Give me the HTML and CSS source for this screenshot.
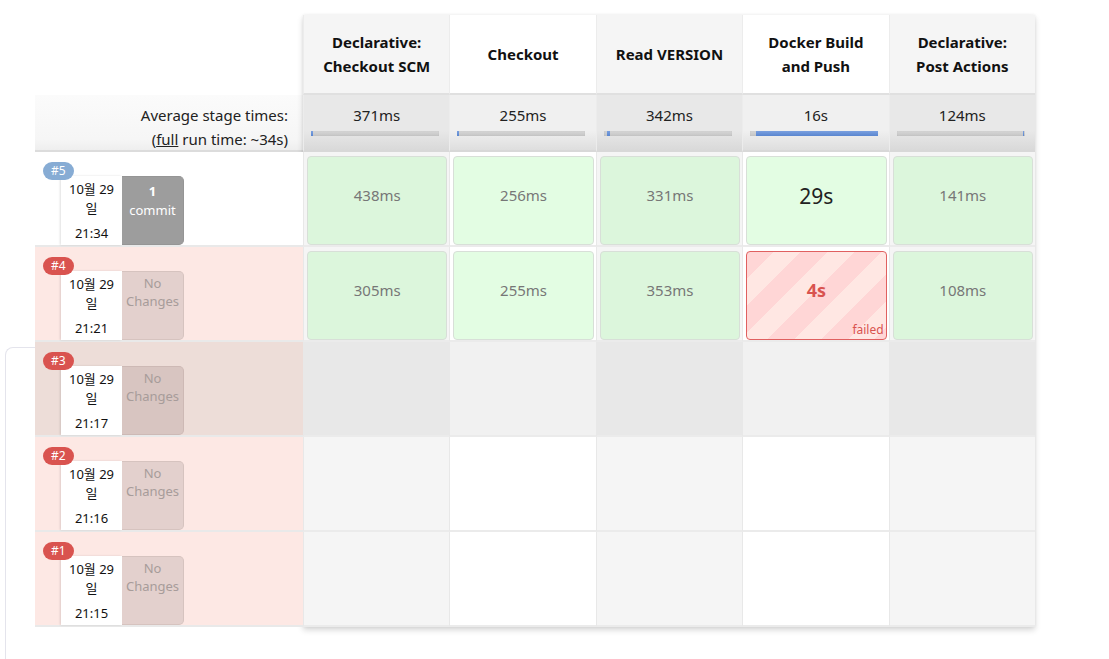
FILE: index.html
```html
<!DOCTYPE html>
<html lang="ko">
<head>
<meta charset="utf-8">
<title>Stage View</title>
<link rel="stylesheet" href="styles.css">
</head>
<body>
<div class="page">
  <div class="side-panel"></div>
  <div class="stage-view">
    <div class="builds">
      <div class="builds-head"></div>
      <div class="avg-label">
        <div>Average stage times:</div>
        <div>(<a href="#" class="full">full</a> run time: ~34s)</div>
      </div>

      <div class="build">
        <span class="badge badge-blue">#5</span>
        <div class="date"><div class="day">10월 29<br>일</div><div class="time">21:34</div></div>
        <div class="changes changes-commit"><b>1</b><br>commit</div>
      </div>
      <div class="build failed">
        <span class="badge badge-red">#4</span>
        <div class="date"><div class="day">10월 29<br>일</div><div class="time">21:21</div></div>
        <div class="changes">No<br>Changes</div>
      </div>
      <div class="build failed hover">
        <span class="badge badge-red">#3</span>
        <div class="date"><div class="day">10월 29<br>일</div><div class="time">21:17</div></div>
        <div class="changes">No<br>Changes</div>
      </div>
      <div class="build failed">
        <span class="badge badge-red">#2</span>
        <div class="date"><div class="day">10월 29<br>일</div><div class="time">21:16</div></div>
        <div class="changes">No<br>Changes</div>
      </div>
      <div class="build failed">
        <span class="badge badge-red">#1</span>
        <div class="date"><div class="day">10월 29<br>일</div><div class="time">21:15</div></div>
        <div class="changes">No<br>Changes</div>
      </div>
    </div>

    <div class="grid">
      <div class="head odd">Declarative:<br>Checkout SCM</div>
      <div class="head even">Checkout</div>
      <div class="head odd">Read VERSION</div>
      <div class="head even">Docker Build<br>and Push</div>
      <div class="head odd">Declarative:<br>Post Actions</div>

      <div class="avg odd"><div>371ms</div><div class="bar"><span class="fill" style="margin-left:0px;width:2px"></span></div></div>
      <div class="avg even"><div>255ms</div><div class="bar"><span class="fill" style="margin-left:0px;width:2px"></span></div></div>
      <div class="avg odd"><div>342ms</div><div class="bar"><span class="fill" style="margin-left:3px;width:3px"></span></div></div>
      <div class="avg even"><div>16s</div><div class="bar"><span class="fill" style="margin-left:6px;width:122px"></span></div></div>
      <div class="avg odd"><div>124ms</div><div class="bar"><span class="fill" style="margin-left:126px;width:1px"></span></div></div>

      <div class="cell odd"><div class="box ok">438ms</div></div>
      <div class="cell even"><div class="box ok">256ms</div></div>
      <div class="cell odd"><div class="box ok">331ms</div></div>
      <div class="cell even"><div class="box ok big">29s</div></div>
      <div class="cell odd"><div class="box ok">141ms</div></div>

      <div class="cell odd"><div class="box ok">305ms</div></div>
      <div class="cell even"><div class="box ok">255ms</div></div>
      <div class="cell odd"><div class="box ok">353ms</div></div>
      <div class="cell even"><div class="box fail"><span class="fail-time">4s</span><span class="fail-label">failed</span></div></div>
      <div class="cell odd"><div class="box ok">108ms</div></div>

      <div class="cell odd hover"></div>
      <div class="cell even hover"></div>
      <div class="cell odd hover"></div>
      <div class="cell even hover"></div>
      <div class="cell odd hover"></div>

      <div class="cell odd"></div>
      <div class="cell even"></div>
      <div class="cell odd"></div>
      <div class="cell even"></div>
      <div class="cell odd"></div>

      <div class="cell odd"></div>
      <div class="cell even"></div>
      <div class="cell odd"></div>
      <div class="cell even"></div>
      <div class="cell odd"></div>
    </div>
  </div>
</div>
</body>
</html>
```

FILE: styles.css
```css
* { box-sizing: border-box; }

html, body {
  margin: 0;
  background: #ffffff;
}

body {
  font-family: "Noto Sans", "Noto Sans CJK KR", sans-serif;
  color: #222;
  width: 1109px;
  height: 659px;
  overflow: hidden;
}

.page {
  position: relative;
  height: 659px;
  padding: 15px 0 0 35px;
}

.side-panel {
  position: absolute;
  left: 5px;
  top: 347px;
  width: 60px;
  height: 312px;
  border-top: 1px solid #e4e4ec;
  border-left: 1px solid #e4e4ec;
  border-top-left-radius: 8px;
  z-index: 0;
}

.stage-view {
  position: relative;
  z-index: 1;
  display: flex;
  align-items: flex-start;
}

/* ---------- left build column ---------- */
.builds {
  width: 268px;
  display: flex;
  flex-direction: column;
}

.builds-head {
  height: 80px;
}

.avg-label {
  height: 57px;
  padding: 8px 15px 0 0;
  text-align: right;
  font-size: 15px;
  line-height: 24px;
  color: #222;
  background: linear-gradient(to bottom, #fbfbfb 0%, #f6f6f6 80%, #eeeeee 100%);
  border-bottom: 2px solid #dcdcdc;
}

.full {
  color: #222;
  text-decoration: underline;
}

.build {
  position: relative;
  height: 95px;
  display: flex;
  padding: 24px 0 0 26px;
  background: #ffffff;
  border-bottom: 2px solid #e9e9e9;
}

.build.failed { background: #fde8e4; }
.build.failed.hover { background: #edddd8; }

.badge {
  position: absolute;
  left: 8px;
  top: 10px;
  height: 18px;
  padding: 0 8px;
  border-radius: 9px;
  font-size: 12px;
  line-height: 18px;
  color: #fff;
  z-index: 2;
}

.badge-blue { background: #87acd4; }
.badge-red { background: #d9534f; }

.date {
  width: 61px;
  background: #fff;
  text-align: center;
  font-size: 13px;
  line-height: 19px;
  color: #111;
  padding-top: 4px;
  box-shadow: -1px 0 2px rgba(0, 0, 0, 0.12);
}

.time {
  margin-top: 6px;
}

.changes {
  width: 62px;
  text-align: center;
  font-size: 13px;
  line-height: 18px;
  padding-top: 2px;
  color: #a79c9a;
  background: #e3d0cd;
  border: 1px solid #d6c3bf;
  border-left: none;
  border-radius: 0 5px 5px 0;
}

.hover .changes {
  background: #d8c5c1;
  border-color: #cdb9b5;
}

.changes-commit {
  background: #9d9d9d;
  border-color: #959595;
  color: #fff;
  padding-top: 5px;
  line-height: 19px;
}

/* ---------- stage grid ---------- */
.grid {
  width: 732px;
  display: grid;
  grid-template-columns: repeat(5, 1fr);
  box-shadow: 0 0 3px rgba(0, 0, 0, 0.06), 0 3px 6px rgba(0, 0, 0, 0.16);
}

.head {
  height: 80px;
  display: flex;
  align-items: center;
  justify-content: center;
  text-align: center;
  font-size: 15px;
  font-weight: 700;
  line-height: 24px;
  color: #111;
  border-bottom: 2px solid #e0e0e0;
  border-left: 1px solid #ececec;
}

.head.odd { background: #f5f5f5; }
.head.even { background: #ffffff; }

.avg {
  height: 57px;
  padding: 10px 0 0 7px;
  text-align: center;
  font-size: 15px;
  line-height: 20px;
  color: #222;
  border-left: 1px solid #ececec;
  border-bottom: 2px solid #d8d8d8;
}

.avg > div:first-child {
  padding-right: 7px;
}

.avg.odd { background: linear-gradient(to bottom, #e8e8e8 0%, #e8e8e8 65%, #d9d9d9 100%); }
.avg.even { background: linear-gradient(to bottom, #f0f0f0 0%, #f0f0f0 65%, #dedede 100%); }

.bar {
  display: flex;
  width: 128px;
  height: 5px;
  margin-top: 6px;
  background: linear-gradient(to bottom, #d6d6d6, #c6c6c6);
  box-shadow: inset 0 0 1px rgba(0, 0, 0, 0.15);
}

.fill {
  display: block;
  height: 5px;
  background: linear-gradient(to bottom, #7aa0e0, #5a86cf);
}

.cell {
  height: 95px;
  padding: 4px 2px 0 3px;
  border-left: 1px solid #e8e8e8;
  border-bottom: 2px solid #ebebeb;
}

.cell.odd { background: #f5f5f5; }
.cell.even { background: #ffffff; }
.cell.odd.hover { background: #e8e8e8; }
.cell.even.hover { background: #f1f1f1; }

.box {
  position: relative;
  height: 89px;
  border-radius: 4px;
  text-align: center;
  font-size: 15px;
  line-height: 20px;
  padding-top: 28px;
}

.box.ok {
  color: #777;
  border: 1px solid #d8dfd8;
}

.odd .box.ok { background: #dcf6dc; }
.even .box.ok { background: #e3fde3; }

.box.big {
  color: #222;
  font-size: 21px;
  line-height: 24px;
  padding-top: 27px;
}

.box.fail {
  border: 1.5px solid #e06060;
  background: repeating-linear-gradient(135deg, #ffd6d6 0px, #ffd6d6 19px, #ffe7e3 19px, #ffe7e3 38px);
  padding-top: 26px;
}

.fail-time {
  font-size: 18px;
  font-weight: 700;
  line-height: 24px;
  color: #d9534f;
}

.fail-label {
  position: absolute;
  right: 2px;
  bottom: 2px;
  font-size: 12px;
  line-height: 14px;
  color: #d9534f;
}
```
